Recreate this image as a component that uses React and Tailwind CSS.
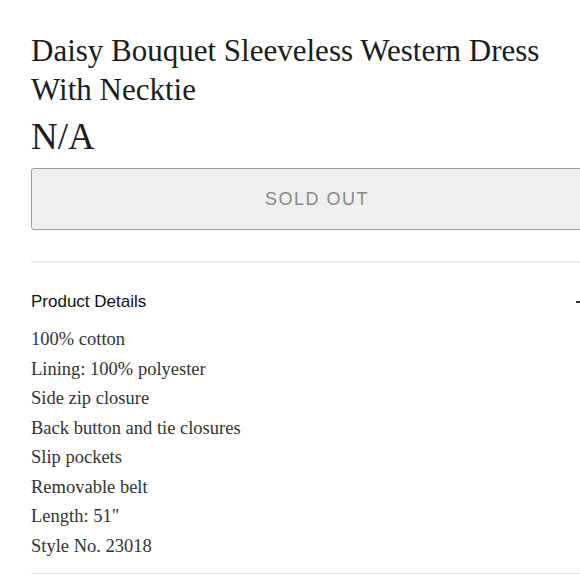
import React from 'react';

const details = [
  '100% cotton',
  'Lining: 100% polyester',
  'Side zip closure',
  'Back button and tie closures',
  'Slip pockets',
  'Removable belt',
  'Length: 51"',
  'Style No. 23018',
];

const serif = { fontFamily: '"Liberation Serif", "DejaVu Serif", serif' };

const App = () => {
  return (
    <div className="w-[580px] h-[580px] overflow-hidden bg-white">
      <div className="w-[572px] ml-[31px]">
        {/* Title */}
        <h1
          className="pt-[31px] w-[530px] text-[31px] leading-[39px] text-[#1c1c1c] font-normal"
          style={serif}
        >
          Daisy Bouquet Sleeveless Western Dress With Necktie
        </h1>
        <div className="mt-[6px] text-[37px] leading-[44px] text-[#1c1c1c]" style={serif}>
          N/A
        </div>

        {/* Button */}
        <button
          className="mt-[9px] w-full h-[62px] bg-[#efefef] border border-[#9c9c9c] rounded-[3px] text-[18px] tracking-[1.5px] text-[#8a8a8a]"
          style={{ fontFamily: '"Liberation Sans", Arial, sans-serif' }}
        >
          SOLD OUT
        </button>

        <div className="mt-[31px] h-[2px] bg-[#ececec]" />

        {/* Product details */}
        <div className="mt-[28px] flex items-center justify-between">
          <h2
            className="text-[17px] leading-[22px] text-[#111]"
            style={{ fontFamily: '"Liberation Sans", Arial, sans-serif' }}
          >
            Product Details
          </h2>
          <span className="mr-[17px] w-[10px] h-[2px] bg-[#333]" />
        </div>

        <ul className="mt-[12px] text-[18.5px] leading-[29.5px] text-[#333]" style={serif}>
          {details.map((d) => (
            <li key={d}>{d}</li>
          ))}
        </ul>

        <div className="mt-[12px] h-[1px] bg-[#e2e2e2]" />
      </div>
    </div>
  );
};

export default App;
